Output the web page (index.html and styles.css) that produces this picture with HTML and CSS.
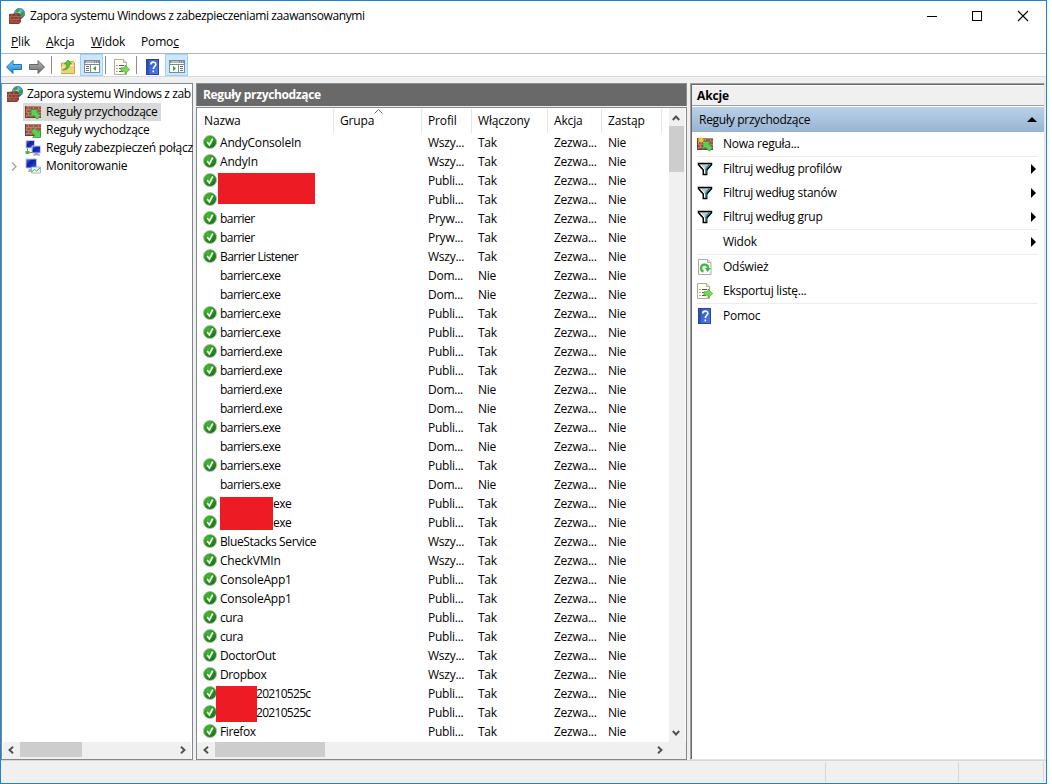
FILE: index.html
```html
<!DOCTYPE html>
<html lang="pl">
<head>
  <meta charset="UTF-8">
  <title>Zapora systemu Windows z zabezpieczeniami zaawansowanymi</title>
  <link rel="stylesheet" href="styles.css">
</head>
<body>

  <svg class="defs" width="0" height="0">
    <defs>
      <linearGradient id="gBlue" x1="0" y1="0" x2="0" y2="1"><stop offset="0" stop-color="#7fd0fa"/><stop offset="1" stop-color="#1385d6"/></linearGradient>
      <linearGradient id="gGrey" x1="0" y1="0" x2="0" y2="1"><stop offset="0" stop-color="#b5b5b5"/><stop offset="1" stop-color="#6d6d6d"/></linearGradient>
      <linearGradient id="gScreen" x1="0" y1="0" x2="1" y2="1"><stop offset="0" stop-color="#5a7df0"/><stop offset=".4" stop-color="#0b1fae"/><stop offset="1" stop-color="#2f57d8"/></linearGradient>
      <linearGradient id="gHelp" x1="0" y1="0" x2="1" y2="1"><stop offset="0" stop-color="#3558bf"/><stop offset="1" stop-color="#4e7be0"/></linearGradient>
      <radialGradient id="gOk" cx=".35" cy=".3" r=".8"><stop offset="0" stop-color="#3fbf2a"/><stop offset="1" stop-color="#0d6b0c"/></radialGradient>
      <radialGradient id="gGlobe" cx=".4" cy=".35" r=".7"><stop offset="0" stop-color="#a5e2ff"/><stop offset="1" stop-color="#1a5fc4"/></radialGradient>
    </defs>
    <symbol id="wall" viewBox="0 0 16 16">
      <rect x="0" y="2" width="16" height="12" fill="#a35443"/>
      <path d="M0 2.500h16M0 5.500h16M0 8.500h16M0 11.500h16M3.500 3v2M8.500 3v2M13.500 3v2M1.500 6v2M6 6v2M11 6v2M3.500 9v2M8.500 9v2M1.500 12v2M6 12v2M11 12v2" stroke="#c08a7a" stroke-width=".8" fill="none"/>
      <path d="M0 13.500h16M.5 2v12" stroke="#7a3a2e"/>
    </symbol>
    <symbol id="firewall" viewBox="0 0 16 16">
      <circle cx="10.500" cy="5.500" r="5.200" fill="url(#gGlobe)" stroke="#2c6aa8" stroke-width=".6"/>
      <path d="M7 2l3-1.500 1 2-2 2-2.500 0zM12 4l3 0 .5 3-2 2-2-2z" fill="#35a53a"/>
      <path d="M0 6l10-1 2 2v7l-2 2H0z" fill="#8a3b2c"/>
      <path d="M0 8.500h12M0 11.500h12M0 14h11M3 6v2.500M7 6v2.500M1.500 9v2.500M5 9v2.500M9 9v2.500M3 12v2M7 12v2" stroke="#b87362" stroke-width=".7" fill="none"/>
    </symbol>
    <symbol id="inbound" viewBox="0 0 16 16">
      <use href="#wall"/>
      <path d="M6 5.500h8l-2.200 2.200 4 4-3.500 3.500-4-4L6 13.500z" fill="#5ccf55" stroke="#2c8a30" stroke-width=".7"/>
    </symbol>
    <symbol id="outbound" viewBox="0 0 16 16">
      <use href="#wall"/>
      <path d="M15.500 15.500H7.500l2.200-2.200L6 9.500 9.500 6l3.800 3.700 2.200-2.200z" fill="#5ccf55" stroke="#2c8a30" stroke-width=".7"/>
    </symbol>
    <symbol id="newrule" viewBox="0 0 16 16">
      <use href="#inbound"/>
      <path d="M4 0l.8 2.400L7 1 5.800 3.200 8 4 5.800 4.800 7 7 4.800 5.600 4 8 3.200 5.600 1 7 2.200 4.800 0 4l2.200-.8L1 1l2.200 1.400z" fill="#f7c437"/>
    </symbol>
    <symbol id="computers" viewBox="0 0 16 16">
      <path d="M1 .5h8.500v7.500H1z" fill="url(#gScreen)" stroke="#c9ccd8"/>
      <path d="M7 6h8.500v7H7z" fill="url(#gScreen)" stroke="#c9ccd8"/>
      <path d="M10 13.500h3v1.500h2H8h2z" fill="#9da3ae" stroke="#8b909c" stroke-width=".6"/>
      <path d="M2.500 8.500v4" stroke="#7b818e"/>
      <rect x=".5" y="11" width="4" height="3" fill="#43c334"/>
      <path d="M4.500 12.500h3" stroke="#7b818e"/>
    </symbol>
    <symbol id="monitor" viewBox="0 0 16 16">
      <path d="M1 1h10.500v9H1z" fill="url(#gScreen)" stroke="#b9bfcc"/>
      <path d="M4 11h4l1 3H3z" fill="#a9afbb"/>
      <path d="M6.500 9h9v6h-9z" fill="#f3fafb" stroke="#8ba6b5" stroke-width=".8"/>
      <path d="M7 13.500l2.500-2 2 1.500 3.500-3" fill="none" stroke="#35a86d"/>
    </symbol>
    <symbol id="back" viewBox="0 0 16 16">
      <path d="M.5 8L7 1.500v4h8.500v5H7v4z" fill="url(#gBlue)" stroke="#1769ad" stroke-width=".9"/>
    </symbol>
    <symbol id="forward" viewBox="0 0 16 16">
      <path d="M15.500 8L9 1.500v4H.5v5H9v4z" fill="url(#gGrey)" stroke="#5c5c5c" stroke-width=".9"/>
    </symbol>
    <symbol id="folderup" viewBox="0 0 16 16">
      <path d="M1.500 4h6l1-1.500h5L14.500 4v10.500h-13z" fill="#f0d274" stroke="#b8923a" stroke-width=".8"/>
      <path d="M2 13.800V8h6l1-1.500h5" stroke="#fbedb4" fill="none"/>
      <path d="M2.500 11C6 10 6.800 7.500 6.500 5H4.500L8 1l3.500 4H9.500c.3 3.500-2 6-7 6z" fill="#57c43a" stroke="#2f8d20" stroke-width=".6"/>
    </symbol>
    <symbol id="panel" viewBox="0 0 16 16">
      <rect x=".5" y="1.500" width="15" height="12" fill="#fff" stroke="#808890"/>
      <path d="M1 3h14" stroke="#808890" stroke-width="2"/>
      <path d="M2 3h8M11 3h1M13 3h1" stroke="#e6ebf0"/>
      <path d="M1 5.500h14M6.500 6v7" stroke="#808890"/>
      <path d="M2 7.500h3M2 9.500h3M2 11.500h3" stroke="#68727c"/>
      <path d="M12 7v5L9 9.500z" fill="#2ba52b"/>
    </symbol>
    <symbol id="panelright" viewBox="0 0 16 16">
      <rect x=".5" y="1.500" width="15" height="12" fill="#fff" stroke="#808890"/>
      <path d="M1 3h14" stroke="#808890" stroke-width="2"/>
      <path d="M2 3h8M11 3h1M13 3h1" stroke="#e6ebf0"/>
      <path d="M1 5.500h14M9.500 6v7" stroke="#808890"/>
      <path d="M11 7.500h3M11 9.500h3M11 11.500h3" stroke="#68727c"/>
      <path d="M4 7v5l3-2.500z" fill="#2ba52b"/>
    </symbol>
    <symbol id="export" viewBox="0 0 16 16">
      <path d="M.5.5h9l3 3v12H.5z" fill="#fffdeb" stroke="#a5a596" stroke-width=".9"/>
      <path d="M9.500.5v3h3" fill="#e4e4da" stroke="#a5a596" stroke-width=".8"/>
      <path d="M2.500 6.500h1M2.500 9.500h1M2.500 12.500h1M5 6.500h5M5 9.500h3M5 12.500h4" stroke="#565a72"/>
      <path d="M7 8.800h4V6l4.700 4.500L11 15v-2.800H7z" fill="#7ddb50" stroke="#41a82c" stroke-width=".7"/>
    </symbol>
    <symbol id="refresh" viewBox="0 0 16 16">
      <path d="M1.500.5h9l3.500 3v12H1.500z" fill="#fafafa" stroke="#a2a2a2" stroke-width=".9"/>
      <path d="M10.500.5v3H14" fill="#ddd" stroke="#a2a2a2" stroke-width=".8"/>
      <path d="M6.500 12.500A3.500 3.500 0 1 1 11 9.500" fill="none" stroke="#3db83a" stroke-width="2.200"/>
      <path d="M8 9h5.500v.5L10.500 13z" fill="#3db83a"/>
    </symbol>
    <symbol id="help" viewBox="0 0 16 16">
      <rect x="1.500" y=".5" width="12" height="15" fill="url(#gHelp)" stroke="#27489f"/>
      <path d="M3 1v14" stroke="#23419a"/>
      <path d="M5.800 5.500C5.800 2.400 10.800 2.400 10.800 5.300 10.800 7.500 8.300 7.500 8.300 10M8.300 11.500v1.800" fill="none" stroke="#fff" stroke-width="1.600"/>
    </symbol>
    <symbol id="funnel" viewBox="0 0 16 16">
      <path d="M1.500 2.500h13v1.200L9.700 9v4.500H6.300V9L1.500 3.700z" fill="#c3c9c9" stroke="#000" stroke-width="1.500"/>
      <path d="M4 4l3.500 4.500v4" fill="none" stroke="#fff"/>
      <path d="M12.500 3.500L9 7.800V13" fill="none" stroke="#17838c" stroke-width="1.300"/>
    </symbol>
    <symbol id="ok" viewBox="0 0 14 14">
      <circle cx="7" cy="7" r="6.500" fill="url(#gOk)" stroke="#b3bab3" stroke-width="1"/>
      <path d="M4.200 7l2.200 3 3.400-6.500" fill="none" stroke="#fff" stroke-width="1.700"/>
    </symbol>
    <symbol id="chevron" viewBox="0 0 8 8">
      <path d="M2 .8L5.500 4 2 7.200" fill="none" stroke="#505050" stroke-width="1.900"/>
    </symbol>
  </svg>

  <div class="window">
    <header class="titlebar">
      <svg class="icon"><use href="#firewall"/></svg>
      <span class="title">Zapora systemu Windows z zabezpieczeniami zaawansowanymi</span>
      <svg class="winbtns" width="104" height="12" viewBox="0 0 104 12">
        <path d="M1 6.500h10" stroke="#000"/>
        <rect x="46.500" y="1.500" width="9" height="9" fill="none" stroke="#000"/>
        <path d="M92 1l10 10M102 1L92 11" stroke="#000" stroke-width="1.100"/>
      </svg>
    </header>

    <nav class="menu">
      <span class="m1"><u>P</u>lik</span>
      <span class="m2"><u>A</u>kcja</span>
      <span class="m3"><u>W</u>idok</span>
      <span class="m4">Pomo<u>c</u></span>
    </nav>

    <div class="toolbar">
      <span class="tool"><svg class="icon"><use href="#back"/></svg></span>
      <span class="tool"><svg class="icon"><use href="#forward"/></svg></span>
      <i class="sep"></i>
      <span class="tool up"><svg class="icon"><use href="#folderup"/></svg></span>
      <span class="tool on"><svg class="icon"><use href="#panel"/></svg></span>
      <i class="sep s2"></i>
      <span class="tool exp"><svg class="icon"><use href="#export"/></svg></span>
      <i class="sep s3"></i>
      <span class="tool hlp"><svg class="icon"><use href="#help"/></svg></span>
      <span class="tool on"><svg class="icon"><use href="#panelright"/></svg></span>
    </div>

    <main class="panes">
      <section class="tree">
        <div class="tree-body">
          <div class="node root"><svg class="icon"><use href="#firewall"/></svg><span>Zapora systemu Windows z zab</span></div>
          <div class="node"><i class="exp-arrow"></i><span class="pick"><svg class="icon"><use href="#inbound"/></svg><span>Reguły przychodzące</span></span></div>
          <div class="node"><i class="exp-arrow"></i><svg class="icon"><use href="#outbound"/></svg><span>Reguły wychodzące</span></div>
          <div class="node"><i class="exp-arrow"></i><svg class="icon"><use href="#computers"/></svg><span>Reguły zabezpieczeń połącz</span></div>
          <div class="node"><i class="exp-arrow"><svg width="6" height="9" viewBox="0 0 6 9"><path d="M1 .5l4 4-4 4" fill="none" stroke="#a6a6a6" stroke-width="1.400"/></svg></i><svg class="icon"><use href="#monitor"/></svg><span class="mon">Monitorowanie</span></div>
        </div>
        <div class="hscroll">
          <svg class="arr left"><use href="#chevron"/></svg>
          <i class="thumb"></i>
          <svg class="arr"><use href="#chevron"/></svg>
        </div>
      </section>

      <section class="rules">
        <h2>Reguły przychodzące</h2>
        <div class="list">
          <div class="list-main">
            <div class="grid head">
              <span class="c-name">Nazwa</span><span>Grupa<svg class="sort" width="9" height="5" viewBox="0 0 9 5"><path d="M.5 4.500l4-4 4 4" fill="none" stroke="#6b6b6b"/></svg></span><span>Profil</span><span class="wide">Włączony</span><span>Akcja</span><span>Zastąp</span>
            </div>
            <div class="grid"><b><svg><use href="#ok"/></svg>AndyConsoleIn</b><i></i><i>Wszy...</i><i>Tak</i><i>Zezwa...</i><i>Nie</i></div>
            <div class="grid"><b><svg><use href="#ok"/></svg>AndyIn</b><i></i><i>Wszy...</i><i>Tak</i><i>Zezwa...</i><i>Nie</i></div>
            <div class="grid"><b><svg><use href="#ok"/></svg><em class="mask m-a"></em></b><i></i><i>Publi...</i><i>Tak</i><i>Zezwa...</i><i>Nie</i></div>
            <div class="grid"><b><svg><use href="#ok"/></svg></b><i></i><i>Publi...</i><i>Tak</i><i>Zezwa...</i><i>Nie</i></div>
            <div class="grid"><b class="lc"><svg><use href="#ok"/></svg>barrier</b><i></i><i>Pryw...</i><i>Tak</i><i>Zezwa...</i><i>Nie</i></div>
            <div class="grid"><b class="lc"><svg><use href="#ok"/></svg>barrier</b><i></i><i>Pryw...</i><i>Tak</i><i>Zezwa...</i><i>Nie</i></div>
            <div class="grid"><b class="lc"><svg><use href="#ok"/></svg>Barrier Listener</b><i></i><i>Wszy...</i><i>Tak</i><i>Zezwa...</i><i>Nie</i></div>
            <div class="grid"><b class="lc off">barrierc.exe</b><i></i><i>Dom...</i><i>Nie</i><i>Zezwa...</i><i>Nie</i></div>
            <div class="grid"><b class="lc off">barrierc.exe</b><i></i><i>Dom...</i><i>Nie</i><i>Zezwa...</i><i>Nie</i></div>
            <div class="grid"><b class="lc"><svg><use href="#ok"/></svg>barrierc.exe</b><i></i><i>Publi...</i><i>Tak</i><i>Zezwa...</i><i>Nie</i></div>
            <div class="grid"><b class="lc"><svg><use href="#ok"/></svg>barrierc.exe</b><i></i><i>Publi...</i><i>Tak</i><i>Zezwa...</i><i>Nie</i></div>
            <div class="grid"><b class="lc"><svg><use href="#ok"/></svg>barrierd.exe</b><i></i><i>Publi...</i><i>Tak</i><i>Zezwa...</i><i>Nie</i></div>
            <div class="grid"><b class="lc"><svg><use href="#ok"/></svg>barrierd.exe</b><i></i><i>Publi...</i><i>Tak</i><i>Zezwa...</i><i>Nie</i></div>
            <div class="grid"><b class="lc off">barrierd.exe</b><i></i><i>Dom...</i><i>Nie</i><i>Zezwa...</i><i>Nie</i></div>
            <div class="grid"><b class="lc off">barrierd.exe</b><i></i><i>Dom...</i><i>Nie</i><i>Zezwa...</i><i>Nie</i></div>
            <div class="grid"><b class="lc"><svg><use href="#ok"/></svg>barriers.exe</b><i></i><i>Publi...</i><i>Tak</i><i>Zezwa...</i><i>Nie</i></div>
            <div class="grid"><b class="lc off">barriers.exe</b><i></i><i>Dom...</i><i>Nie</i><i>Zezwa...</i><i>Nie</i></div>
            <div class="grid"><b class="lc"><svg><use href="#ok"/></svg>barriers.exe</b><i></i><i>Publi...</i><i>Tak</i><i>Zezwa...</i><i>Nie</i></div>
            <div class="grid"><b class="lc off">barriers.exe</b><i></i><i>Dom...</i><i>Nie</i><i>Zezwa...</i><i>Nie</i></div>
            <div class="grid"><b class="lc"><svg><use href="#ok"/></svg><em class="mask m-b"></em><span class="ext">exe</span></b><i></i><i>Publi...</i><i>Tak</i><i>Zezwa...</i><i>Nie</i></div>
            <div class="grid"><b class="lc"><svg><use href="#ok"/></svg><span class="ext">exe</span></b><i></i><i>Publi...</i><i>Tak</i><i>Zezwa...</i><i>Nie</i></div>
            <div class="grid"><b class="mid"><svg><use href="#ok"/></svg>BlueStacks Service</b><i></i><i>Wszy...</i><i>Tak</i><i>Zezwa...</i><i>Nie</i></div>
            <div class="grid"><b><svg><use href="#ok"/></svg>CheckVMIn</b><i></i><i>Wszy...</i><i>Tak</i><i>Zezwa...</i><i>Nie</i></div>
            <div class="grid"><b><svg><use href="#ok"/></svg>ConsoleApp1</b><i></i><i>Publi...</i><i>Tak</i><i>Zezwa...</i><i>Nie</i></div>
            <div class="grid"><b><svg><use href="#ok"/></svg>ConsoleApp1</b><i></i><i>Publi...</i><i>Tak</i><i>Zezwa...</i><i>Nie</i></div>
            <div class="grid"><b class="mid"><svg><use href="#ok"/></svg>cura</b><i></i><i>Publi...</i><i>Tak</i><i>Zezwa...</i><i>Nie</i></div>
            <div class="grid"><b class="mid"><svg><use href="#ok"/></svg>cura</b><i></i><i>Publi...</i><i>Tak</i><i>Zezwa...</i><i>Nie</i></div>
            <div class="grid"><b class="mid"><svg><use href="#ok"/></svg>DoctorOut</b><i></i><i>Wszy...</i><i>Tak</i><i>Zezwa...</i><i>Nie</i></div>
            <div class="grid"><b class="mid"><svg><use href="#ok"/></svg>Dropbox</b><i></i><i>Wszy...</i><i>Tak</i><i>Zezwa...</i><i>Nie</i></div>
            <div class="grid"><b class="lc"><svg><use href="#ok"/></svg><em class="mask m-c"></em><span class="date">20210525c</span></b><i></i><i>Publi...</i><i>Tak</i><i>Zezwa...</i><i>Nie</i></div>
            <div class="grid"><b class="lc"><svg><use href="#ok"/></svg><span class="date">20210525c</span></b><i></i><i>Publi...</i><i>Tak</i><i>Zezwa...</i><i>Nie</i></div>
            <div class="grid"><b class="mid"><svg><use href="#ok"/></svg>Firefox</b><i></i><i>Publi...</i><i>Tak</i><i>Zezwa...</i><i>Nie</i></div>
          </div>
          <div class="vscroll">
            <svg class="arr upw"><use href="#chevron"/></svg>
            <i class="vthumb"></i>
            <svg class="arr down"><use href="#chevron"/></svg>
          </div>
        </div>
        <div class="hscroll wide-scroll">
          <svg class="arr left"><use href="#chevron"/></svg>
          <i class="thumb"></i>
          <svg class="arr"><use href="#chevron"/></svg>
        </div>
      </section>

      <aside class="actions">
        <h3>Akcje</h3>
        <div class="group"><span>Reguły przychodzące</span><svg width="10" height="5" viewBox="0 0 10 5"><path d="M5 0l5 5H0z"/></svg></div>
        <div class="act"><svg class="icon"><use href="#newrule"/></svg><span>Nowa reguła...</span></div>
        <hr>
        <div class="act sub"><svg class="icon"><use href="#funnel"/></svg><span>Filtruj według profilów</span></div>
        <div class="act sub"><svg class="icon"><use href="#funnel"/></svg><span>Filtruj według stanów</span></div>
        <div class="act sub"><svg class="icon"><use href="#funnel"/></svg><span>Filtruj według grup</span></div>
        <hr>
        <div class="act sub"><svg class="icon"></svg><span>Widok</span></div>
        <hr>
        <div class="act"><svg class="icon"><use href="#refresh"/></svg><span>Odśwież</span></div>
        <div class="act"><svg class="icon"><use href="#export"/></svg><span>Eksportuj listę...</span></div>
        <hr>
        <div class="act"><svg class="icon"><use href="#help"/></svg><span>Pomoc</span></div>
      </aside>
    </main>

    <footer class="status"><i></i><i></i><i></i></footer>
  </div>

</body>
</html>
```
FILE: styles.css
```css
* {
  box-sizing: border-box;
}

body {
  margin: 0;
  background: #fff;
  color: #000;
  font-family: "Open Sans", "Noto Sans", sans-serif;
  font-size: 12px;
  letter-spacing: -0.15px;
  line-height: 18px;
  white-space: nowrap;
  overflow: hidden;
}

.defs {
  position: absolute;
}

i, em {
  font-style: normal;
}

.icon {
  width: 16px;
  height: 16px;
  flex: none;
}

.window {
  width: 1047px;
  height: 784px;
  border: 1px solid #1883d7;
  display: flex;
  flex-direction: column;
  background: #f0f0f0;
}

/* title, menu, toolbar */
.titlebar {
  height: 30px;
  background: #fff;
  display: flex;
  align-items: center;
  padding: 0 16px 1px 8px;
}

.title {
  margin-left: 5px;
  padding-top: 1px;
  letter-spacing: -0.38px;
}

.winbtns {
  margin-left: auto;
}

.menu {
  height: 23px;
  background: #fff;
  border-bottom: 1px solid #b0b4bf;
  display: flex;
  align-items: center;
  padding-left: 10px;
  flex: none;
}

.menu u {
  text-underline-offset: 1px;
}

.m1 { width: 35px; }
.m2 { width: 45px; }
.m3 { width: 50px; }

.toolbar {
  height: 23px;
  background: #fff;
  border-bottom: 1px solid #d9d9d9;
  display: flex;
  align-items: center;
  padding-left: 1px;
  flex: none;
}

.tool {
  width: 23px;
  height: 22px;
  display: flex;
  align-items: center;
  justify-content: center;
  padding-top: 3px;
}

.tool.on {
  background: #cce8ff;
  border: 1px solid #99d1ff;
}

.sep {
  width: 1px;
  height: 18px;
  background: #8d8d8d;
  margin: 0 4px 0 3px;
}

.up { margin-right: 1px; }
.sep.s2 { margin: 0 4px 0 2px; }
.sep.s3 { margin: 0 4px 0 3px; }
.hlp { margin-right: 1px; }

/* panes */
.panes {
  height: 677px;
  margin-top: 6px;
  display: flex;
  flex: none;
}

.tree {
  width: 192px;
  background: #fff;
  border: 1px solid #828790;
  display: flex;
  flex-direction: column;
  justify-content: space-between;
  padding: 1px 1px 0;
}

.node {
  display: flex;
  align-items: center;
  height: 18px;
  letter-spacing: -0.26px;
}

.node.root {
  padding-left: 4px;
  letter-spacing: -0.42px;
}

.node .icon + span {
  margin-left: 5px;
}

.node.root .icon + span {
  margin-left: 4px;
}

.node .mon {
  letter-spacing: -0.3px;
}

.exp-arrow {
  width: 22px;
  padding-left: 8px;
  display: flex;
  flex: none;
}

.pick {
  display: flex;
  align-items: center;
  background: #d9d9d9;
  height: 18px;
  margin-left: -2px;
  padding: 0 3px 0 2px;
}

.hscroll {
  height: 17px;
  background: #f0f0f0;
  display: flex;
  align-items: flex-start;
  flex: none;
}

.arr {
  width: 8px;
  height: 8px;
  margin: 4px 4px 0 5px;
  flex: none;
}

.arr.left {
  transform: scaleX(-1);
  margin: 4px 5px 0 4px;
}

.hscroll .thumb {
  width: 62px;
  height: 15px;
  background: #cdcdcd;
  margin-right: auto;
}

.rules {
  width: 491px;
  margin-left: 3px;
  display: flex;
  flex-direction: column;
}

.rules h2 {
  margin: 0;
  height: 23px;
  border: 1px solid #8b8f94;
  border-bottom: 0;
  background: #696969;
  color: #fff;
  font-size: 12px;
  letter-spacing: -0.35px;
  line-height: 22px;
  padding-left: 6px;
  margin-bottom: 1px;
}

.list {
  flex: 1;
  background: #fff;
  border: 1px solid #828790;
  border-bottom: 0;
  display: flex;
  min-height: 0;
}

.list-main {
  width: 472px;
}

.grid {
  display: grid;
  grid-template-columns: 136px 88px 50px 76px 54px 68px;
  height: 19px;
  align-items: center;
}

.grid b {
  font-weight: normal;
  letter-spacing: -0.2px;
  padding-left: 6px;
  display: flex;
  align-items: center;
  gap: 3px;
  position: relative;
}

.grid b.mid {
  letter-spacing: -0.38px;
}

.grid b.lc {
  letter-spacing: -0.56px;
}

.grid b svg {
  width: 14px;
  height: 14px;
  flex: none;
  margin-top: -2px;
}

.grid b.off {
  padding-left: 23px;
}

.grid > i {
  padding-left: 7px;
  letter-spacing: -0.25px;
}

.grid .ext {
  margin-left: 53px;
}

.grid .date {
  margin-left: 36px;
  letter-spacing: -0.7px;
}

.head {
  height: 25px;
  grid-template-columns: 137px 88px 50px 76px 54px 60px;
}

.head span {
  height: 24px;
  border-right: 1px solid #e5e5e5;
  padding-left: 6px;
  padding-top: 3px;
  position: relative;
}

.head .c-name {
  padding-left: 7px;
}

.sort {
  position: absolute;
  left: 40px;
  top: 0;
}

/* painted-over names */
.mask {
  position: absolute;
  background: #ed1c24;
  z-index: 1;
}

.m-a {
  left: 21px;
  top: -2px;
  width: 97px;
  height: 31px;
}

.m-b {
  left: 23px;
  top: 2px;
  width: 53px;
  height: 33px;
}

.m-c {
  left: 19px;
  top: 1px;
  width: 41px;
  height: 36px;
}

.vscroll {
  width: 16px;
  background: #f0f0f0;
  display: flex;
  flex-direction: column;
}

.vscroll .arr {
  margin: 6px 0 4px 3px;
}

.upw {
  transform: rotate(-90deg);
}

.vscroll .down {
  transform: rotate(90deg);
  margin: auto 0 5px 3px;
}

.vthumb {
  width: 15px;
  height: 46px;
  background: #cdcdcd;
}

.wide-scroll {
  height: 18px;
  border: 1px solid #828790;
  border-top: 0;
  padding: 0 18px 0 1px;
}

.wide-scroll .thumb {
  width: 110px;
}

.actions {
  width: 355px;
  margin-left: 3px;
  background: #fff;
  border: 1px solid #e3e3e3;
  border-left: 1px solid #a0a0a0;
  border-top: 1px solid #a0a0a0;
  box-shadow: inset 1px 1px 0 #696969;
  padding: 1px 0 0 1px;
}

.actions h3 {
  margin: 1px 0 1px;
  height: 20px;
  background: #f0f0f0;
  border-bottom: 1px solid #a0a0a0;
  font-size: 12px;
  line-height: 19px;
  padding-left: 5px;
}

.group {
  height: 25px;
  background: linear-gradient(#b9d1ea, #99b4d1);
  display: flex;
  align-items: center;
  justify-content: space-between;
  padding: 0 7px;
  letter-spacing: -0.28px;
}

.act {
  height: 24px;
  display: flex;
  align-items: center;
  padding: 0 8px 0 5px;
  letter-spacing: -0.26px;
}

.act span {
  margin-left: 10px;
}

.sub::after {
  content: "";
  margin-left: auto;
  border: 5px solid transparent;
  border-left-color: #000;
  border-right: 0;
}

.actions hr {
  margin: 0 6px 0 5px;
  border: 0;
  height: 1px;
  background: #ededed;
}

.status {
  flex: 1;
  border-top: 1px solid #d7d7d7;
  display: flex;
  justify-content: flex-end;
  padding: 1px 2px 1px 0;
}

.status i {
  border-right: 1px solid #d7d7d7;
  width: 133px;
}

.status i:last-child {
  width: 85px;
}
```
